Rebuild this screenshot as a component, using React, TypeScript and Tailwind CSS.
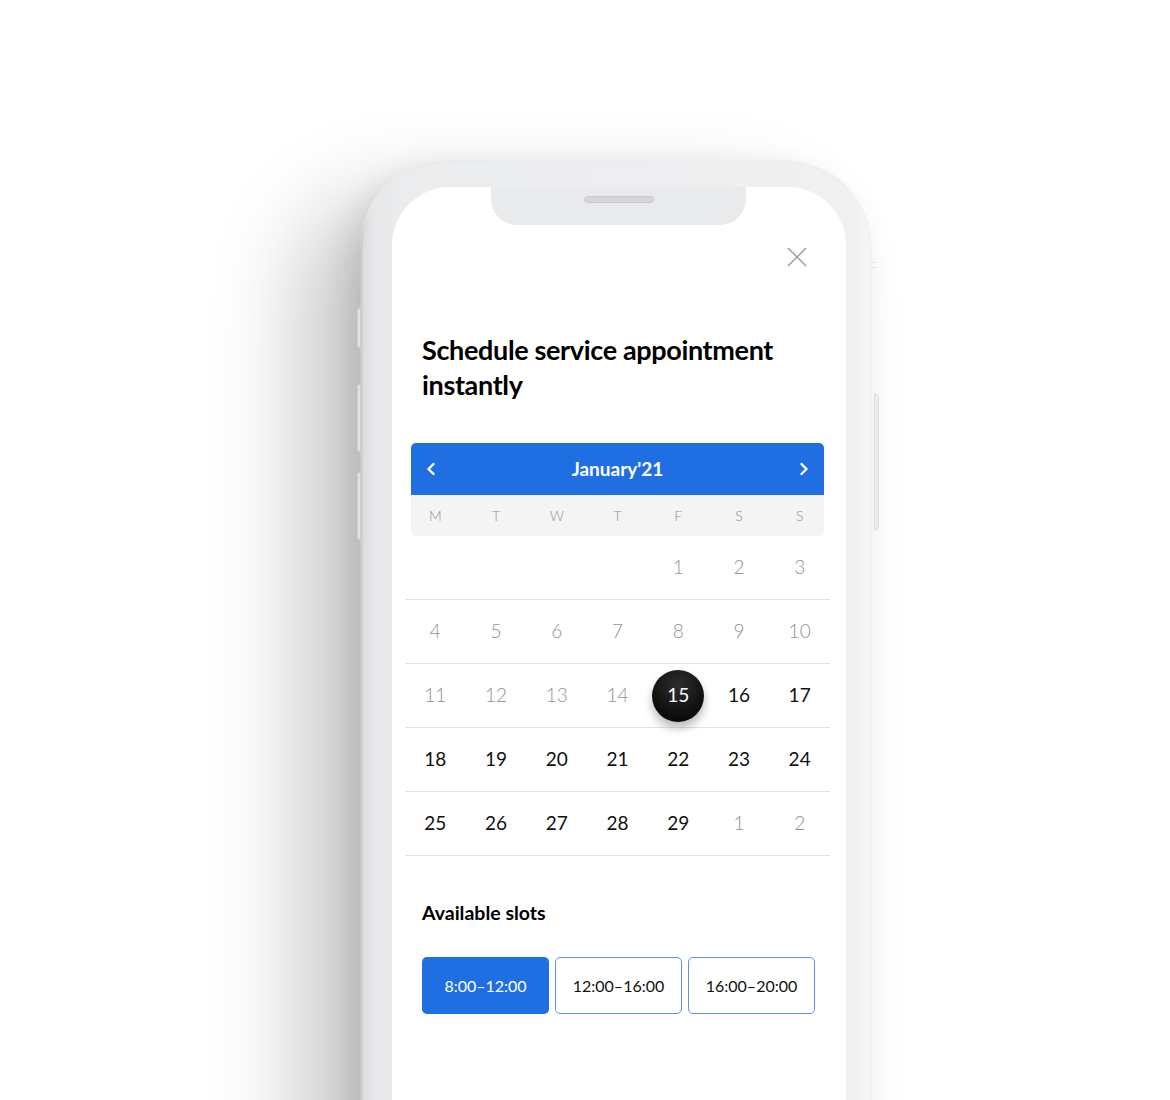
import React from "react";

type Cell = { n: string; tone: "gray" | "black" | "sel" | "empty" };

const g = (n: string): Cell => ({ n, tone: "gray" });
const b = (n: string): Cell => ({ n, tone: "black" });
const e: Cell = { n: "", tone: "empty" };

const rows: Cell[][] = [
  [e, e, e, e, g("1"), g("2"), g("3")],
  [g("4"), g("5"), g("6"), g("7"), g("8"), g("9"), g("10")],
  [g("11"), g("12"), g("13"), g("14"), { n: "15", tone: "sel" }, b("16"), b("17")],
  [b("18"), b("19"), b("20"), b("21"), b("22"), b("23"), b("24")],
  [b("25"), b("26"), b("27"), b("28"), b("29"), g("1"), g("2")],
];

const days = ["M", "T", "W", "T", "F", "S", "S"];

function DayCell({ c }: { c: Cell }) {
  if (c.tone === "sel") {
    return (
      <div className="flex items-center justify-center">
        <div className="w-[52px] h-[52px] rounded-full bg-[radial-gradient(circle_at_50%_30%,#2e2e2e_0%,#111_60%,#000_100%)] shadow-[0_6px_10px_rgba(0,0,0,0.28)] flex items-center justify-center text-white text-[19px] font-normal">
          {c.n}
        </div>
      </div>
    );
  }
  return (
    <div
      className={
        c.tone === "gray"
          ? "flex items-center justify-center text-[19px] font-light text-[#929292]"
          : "flex items-center justify-center text-[19px] font-normal text-[#111]"
      }
    >
      {c.n}
    </div>
  );
}

export default function App() {
  return (
    <div
      className="relative w-[1170px] h-[1100px] overflow-hidden bg-white"
      style={{ fontFamily: "Lato, 'Noto Sans', sans-serif" }}
    >
      {/* phone */}
      <div className="ml-[360px] mt-[160px] relative w-[512px] h-[1000px]">
        {/* left side buttons */}
        <div className="absolute left-[-3px] top-[148px] w-[4px] h-[40px] rounded-full bg-[#e2e2e4] border border-[#cfcfd1]" />
        <div className="absolute left-[-3px] top-[224px] w-[4px] h-[68px] rounded-full bg-[#e2e2e4] border border-[#cfcfd1]" />
        <div className="absolute left-[-3px] top-[312px] w-[4px] h-[68px] rounded-full bg-[#e2e2e4] border border-[#cfcfd1]" />
        {/* right side button */}
        <div className="absolute right-[-7px] top-[233px] w-[5px] h-[138px] rounded-r-full bg-[#ececed] border border-[#e0e0e2]" />
        <div className="absolute right-[-4px] top-[102px] w-[5px] h-[6px] border-y border-[#e4e4e6]" />

        <div className="w-full h-full rounded-t-[88px] bg-[linear-gradient(90deg,#c6c6c8_0px,#d8d8da_4px,#e6e7e9_10px,#e9eaec_30px,#eeeff0_480px,#f3f3f4_512px)] shadow-[-60px_40px_90px_rgba(0,0,0,0.22),-10px_10px_30px_rgba(0,0,0,0.10)] p-[3px]">
          <div className="w-full h-full rounded-t-[85px] bg-[linear-gradient(90deg,#dcdcde_0px,#e7e8ea_12px,#ebecee_40px,#f0f0f1_490px,#f6f6f7_506px)] pt-[24px] pl-[29px] pr-[23px]">
            {/* screen */}
            <div className="relative w-[454px] h-[960px] bg-white rounded-t-[58px]">
              {/* notch */}
              <div className="absolute left-[99px] top-0 w-[255px] h-[38px] bg-[#e9eaeb] rounded-b-[26px]">
                <div className="absolute left-[93px] top-[9px] w-[70px] h-[7px] rounded-full bg-[#d6d6d8] border border-[#c9c9cb]" />
              </div>

              {/* close */}
              <div className="flex justify-end pt-[60px] pr-[39px]">
                <svg width="20" height="20" viewBox="0 0 20 20">
                  <line x1="1" y1="1" x2="19" y2="19" stroke="#9a9a9a" strokeWidth="1.4" />
                  <line x1="19" y1="1" x2="1" y2="19" stroke="#9a9a9a" strokeWidth="1.4" />
                </svg>
              </div>

              {/* title */}
              <h1 className="mt-[65px] pl-[30px] text-[27px] leading-[35px] font-bold text-black tracking-[-0.35px]">
                Schedule service appointment
                <br />
                instantly
              </h1>

              {/* calendar */}
              <div className="mt-[41px] ml-[13px] w-[425px]">
                <div className="mx-[6px] h-[52px] rounded-t-[5px] bg-[#1f6fe2] flex items-center justify-between px-[15px]">
                  <svg width="10" height="14" viewBox="0 0 10 14">
                    <polyline points="7.5,2 2.5,7 7.5,12" fill="none" stroke="white" strokeWidth="2.4" strokeLinecap="round" strokeLinejoin="round" />
                  </svg>
                  <span className="text-white text-[19px] font-bold">January'21</span>
                  <svg width="10" height="14" viewBox="0 0 10 14">
                    <polyline points="2.5,2 7.5,7 2.5,12" fill="none" stroke="white" strokeWidth="2.4" strokeLinecap="round" strokeLinejoin="round" />
                  </svg>
                </div>
                <div className="mx-[6px] h-[41px] rounded-b-[5px] bg-[#f4f4f4]">
                  <div className="-mx-[6px] h-full grid grid-cols-7">
                    {days.map((d, i) => (
                      <div key={i} className="flex items-center justify-center text-[14px] font-light text-[#8f8f8f]">
                        {d}
                      </div>
                    ))}
                  </div>
                </div>
                {rows.map((r, ri) => (
                  <div key={ri} className="grid grid-cols-7 h-[64px] border-b border-[#e2e2e2]">
                    {r.map((c, ci) => (
                      <DayCell key={ci} c={c} />
                    ))}
                  </div>
                ))}
              </div>

              {/* slots */}
              <h2 className="mt-[44px] pl-[30px] text-[19.5px] leading-[26px] font-bold text-black">Available slots</h2>
              <div className="mt-[31px] pl-[30px] flex gap-[6px]">
                <div className="w-[127px] h-[57px] rounded-[5px] bg-[#1f6fe2] flex items-center justify-center text-white text-[16px]">
                  8:00–12:00
                </div>
                <div className="w-[127px] h-[57px] rounded-[5px] border-[1.5px] border-[#5a93ee] bg-white flex items-center justify-center text-[#111] text-[16px]">
                  12:00–16:00
                </div>
                <div className="w-[127px] h-[57px] rounded-[5px] border-[1.5px] border-[#5a93ee] bg-white flex items-center justify-center text-[#111] text-[16px]">
                  16:00–20:00
                </div>
              </div>
            </div>
          </div>
        </div>
      </div>
    </div>
  );
}
